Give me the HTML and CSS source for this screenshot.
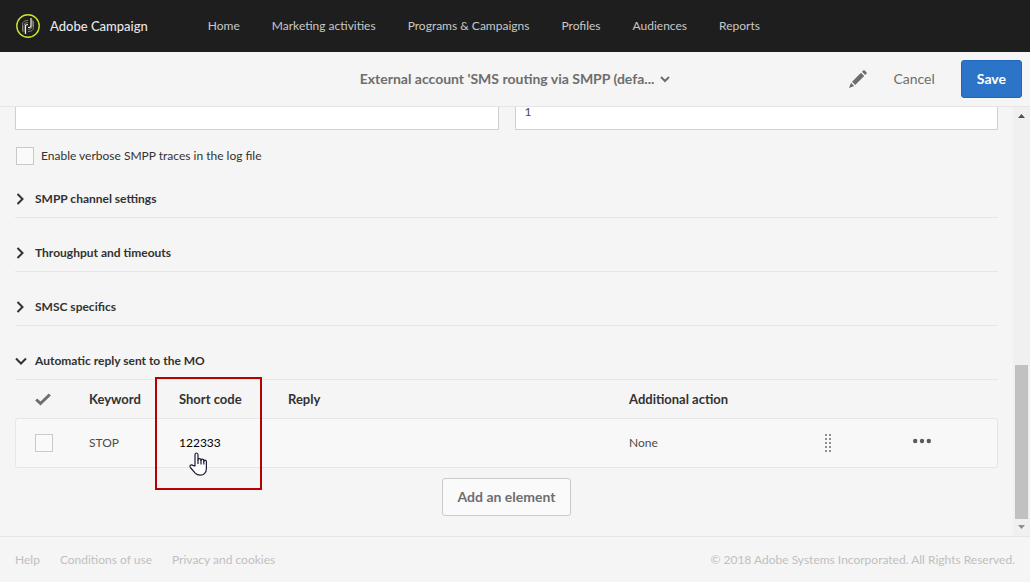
FILE: index.html
```html
<!DOCTYPE html>
<html lang="en">
  <head>
    <meta charset="UTF-8" />
    <meta name="viewport" content="width=device-width, initial-scale=1.0" />
    <title>Adobe Campaign</title>
    <link rel="stylesheet" href="styles.css">
  </head>
  <body>
    <header class="topbar">
      <a class="brand" href="#">
        <svg class="logo" width="24" height="24" viewBox="0 0 24 24" fill="none" aria-hidden="true">
          <circle cx="12" cy="12" r="11.2" stroke="#cbe32d" stroke-width="1.4" />
          <path d="M6.5 17.5V10.5Q6.5 6.5 12 6.5M8 18.5V11.5Q8 8.5 12 8.5" stroke="#85866f" />
          <path d="M17.5 7V13.5Q17.5 17.5 12 17.5M16.2 5.5V12.5Q16 15.5 12 15.5" stroke="#85866f" />
          <path d="M9.5 20V11.5Q9.5 10.5 12 10.5M15 4V12Q15 13.5 12 13.5" stroke="#f4f4dc" stroke-width="1.2" />
        </svg>
        <span>Adobe Campaign</span>
      </a>
      <nav class="nav">
        <a href="#">Home</a>
        <a href="#">Marketing activities</a>
        <a href="#">Programs &amp; Campaigns</a>
        <a href="#">Profiles</a>
        <a href="#">Audiences</a>
        <a href="#">Reports</a>
      </nav>
    </header>

    <div class="toolbar">
      <button class="title" type="button">
        <span>External account 'SMS routing via SMPP (defa...</span>
        <svg width="10" height="7" viewBox="0 0 10 7" fill="none" aria-hidden="true">
          <path d="M1 1l4 4 4-4" stroke="#6e6e6e" stroke-width="2" />
        </svg>
      </button>
      <div class="actions">
        <button class="edit" type="button" aria-label="Edit">
          <svg width="18" height="18" viewBox="0 0 18 18" fill="#6e6e6e" aria-hidden="true">
            <path d="M0 18l2-5.200L5.200 16zM3 11.800L12 2.800l3.200 3.200L6.200 15zM13 1.800l1.200-1.200q.8-.8 1.600 0l1.600 1.600q.8.800 0 1.600L16.200 5z" />
          </svg>
        </button>
        <button class="cancel" type="button">Cancel</button>
        <button class="save" type="button">Save</button>
      </div>
    </div>

    <div class="scroll-area">
      <main class="content">
        <div class="fields">
          <input type="text" aria-label="System type">
          <input type="text" aria-label="Connections" value="1">
        </div>

        <label class="verbose">
          <input class="checkbox" type="checkbox">
          Enable verbose SMPP traces in the log file
        </label>

        <button class="section" type="button" aria-expanded="false">
          <svg width="12" height="12" viewBox="0 0 12 12" fill="none" aria-hidden="true"><path d="M2.500 1l5 5-5 5" stroke="#323232" stroke-width="2" /></svg>
          SMPP channel settings
        </button>
        <button class="section" type="button" aria-expanded="false">
          <svg width="12" height="12" viewBox="0 0 12 12" fill="none" aria-hidden="true"><path d="M2.500 1l5 5-5 5" stroke="#323232" stroke-width="2" /></svg>
          Throughput and timeouts
        </button>
        <button class="section" type="button" aria-expanded="false">
          <svg width="12" height="12" viewBox="0 0 12 12" fill="none" aria-hidden="true"><path d="M2.500 1l5 5-5 5" stroke="#323232" stroke-width="2" /></svg>
          SMSC specifics
        </button>
        <button class="section" type="button" aria-expanded="true">
          <svg width="12" height="12" viewBox="0 0 12 12" fill="none" aria-hidden="true"><path d="M1 3.500l5 5 5-5" stroke="#323232" stroke-width="2" /></svg>
          Automatic reply sent to the MO
        </button>

        <table class="replies">
          <colgroup>
            <col class="col-check">
            <col class="col-keyword">
            <col class="col-code">
            <col>
            <col class="col-action">
            <col class="col-drag">
            <col class="col-more">
          </colgroup>
          <thead>
            <tr>
              <th>
                <svg width="16" height="13" viewBox="0 0 16 13" fill="none" aria-hidden="true">
                  <path d="M1.200 6.500l4.300 4L14.800 1.500" stroke="#6e6e6e" stroke-width="3" />
                </svg>
              </th>
              <th>Keyword</th>
              <th class="marked">Short code<span class="highlight"></span></th>
              <th>Reply</th>
              <th>Additional action</th>
              <th></th>
              <th></th>
            </tr>
          </thead>
          <tbody>
            <tr>
              <td><input class="checkbox" type="checkbox" aria-label="Select STOP"></td>
              <td>STOP</td>
              <td class="code">
                122333
                <svg class="pointer" width="19" height="25" viewBox="0 0 19 25" aria-hidden="true">
                  <path d="M6 14V3q0-2 1.500-2T9 3v5q0-1.400 1.500-1.400T12 8v.6q0-1.400 1.400-1.400t1.400 1.400v1q0-1.400 1.300-1.400t1.300 1.600v7q0 3-2 4.800-1.400 1.500-4 1.500-3.400 0-5.200-2L1.400 15.500q-1-1.600.3-2.400 1.300-.7 2.500.5z" fill="#fff" stroke="#1d1d33" stroke-width="1.200" stroke-linejoin="round" />
                  <path d="M9 7.500V12M12 8V12.500M14.800 9V12.500" fill="none" stroke="#1d1d33" stroke-width="1.200" />
                </svg>
              </td>
              <td></td>
              <td>None</td>
              <td>
                <svg width="6" height="18" viewBox="0 0 6 18" fill="#8e8e8e" aria-hidden="true">
                  <path d="M0 0h2v2H0zM4 0h2v2H4zM0 4h2v2H0zM4 4h2v2H4zM0 8h2v2H0zM4 8h2v2H4zM0 12h2v2H0zM4 12h2v2H4zM0 16h2v2H0zM4 16h2v2H4z" />
                </svg>
              </td>
              <td>
                <button class="more" type="button" aria-label="More">
                  <svg width="18" height="6" viewBox="0 0 18 6" fill="#5a5a5a" aria-hidden="true">
                    <circle cx="2.200" cy="3" r="2.200" /><circle cx="9" cy="3" r="2.200" /><circle cx="15.800" cy="3" r="2.200" />
                  </svg>
                </button>
              </td>
            </tr>
          </tbody>
        </table>

        <button class="add" type="button">Add an element</button>
      </main>

      <div class="scrollbar" aria-hidden="true">
        <svg width="7" height="4" viewBox="0 0 7 4" fill="#505050"><path d="M0 4L3.500 0 7 4z" /></svg>
        <div class="thumb"></div>
        <svg width="7" height="4" viewBox="0 0 7 4" fill="#8e8e8e"><path d="M0 0h7L3.500 4z" /></svg>
      </div>
    </div>

    <footer class="footer">
      <a href="#">Help</a>
      <a href="#">Conditions of use</a>
      <a href="#">Privacy and cookies</a>
      <span class="copyright">© 2018 Adobe Systems Incorporated. All Rights Reserved.</span>
    </footer>
  </body>
</html>
```
FILE: styles.css
```css
* {
  box-sizing: border-box;
}

body {
  margin: 0;
  padding: 0 1px 1px 0;
  height: 100vh;
  display: flex;
  flex-direction: column;
  font-family: Lato, "Open Sans", sans-serif;
  font-size: 12px;
  line-height: 20px;
  color: #4b4b4b;
  background: #fff;
}

a {
  color: inherit;
  text-decoration: none;
}

button {
  font: inherit;
  color: inherit;
  padding: 0;
  border: none;
  background: none;
  cursor: pointer;
}

svg {
  display: block;
  flex: none;
}

.topbar {
  height: 52px;
  flex: none;
  display: flex;
  align-items: center;
  gap: 60px;
  padding: 0 16px;
  background: #1e1e1e;
  color: #c8c8c8;
  white-space: nowrap;
}

.brand {
  display: flex;
  align-items: center;
  gap: 10px;
  font-size: 13px;
  font-weight: 500;
  color: #e6e6e6;
}

.nav {
  display: flex;
  gap: 32px;
}

.toolbar {
  height: 55px;
  flex: none;
  display: grid;
  grid-template-columns: 1fr auto 1fr;
  align-items: center;
  padding: 0 8px;
  background: #f5f5f5;
  border-bottom: 1px solid #e6e6e6;
  white-space: nowrap;
}

.title {
  grid-column: 2;
  display: flex;
  align-items: center;
  gap: 6px;
  font-size: 14px;
  font-weight: bold;
  color: #6e6e6e;
}

.actions {
  display: flex;
  align-items: center;
  justify-content: flex-end;
  gap: 26px;
  font-size: 14px;
  color: #6e6e6e;
}

.save {
  height: 38px;
  padding: 0 15px;
  border: 1px solid #1f67bc;
  border-radius: 3px;
  background: #2b74c7;
  color: #fff;
  font-weight: bold;
}

.scroll-area {
  flex: 1;
  min-height: 0;
  display: flex;
  overflow: hidden;
  background: #f5f5f5;
}

.content {
  flex: 1;
  min-width: 0;
  padding: 0 15px;
  display: flex;
  flex-direction: column;
}

/* the form is scrolled down, so its first row is cut by the toolbar */
.fields {
  display: grid;
  grid-template-columns: 1fr 1fr;
  gap: 16px;
  margin-top: -15px;
}

.fields input {
  height: 38px;
  min-width: 0;
  padding: 0 9px;
  border: 1px solid #d0d0d0;
  background: #fff;
  font: inherit;
  color: #4b4b4b;
}

.checkbox {
  appearance: none;
  display: block;
  width: 18px;
  height: 18px;
  margin: 0;
  border: 1px solid #cacaca;
  background: #fafafa;
}

.verbose {
  display: flex;
  align-items: center;
  gap: 7px;
  margin: 16px 0 14px 1px;
  color: #323232;
}

.section {
  flex: none;
  height: 38px;
  display: flex;
  align-items: center;
  gap: 8px;
  border-bottom: 1px solid #e6e6e6;
  font-weight: bold;
  color: #323232;
}

.section + .section {
  margin-top: 16px;
}

.replies {
  width: 100%;
  table-layout: fixed;
  border-collapse: separate;
  border-spacing: 0;
}

.col-check {
  width: 74px;
}

.col-keyword {
  width: 90px;
}

.col-code {
  width: 109px;
}

.col-action {
  width: 196px;
}

.col-drag {
  width: 88px;
}

.col-more {
  width: 85px;
}

.replies th,
.replies td {
  padding: 0;
  text-align: left;
}

.replies th {
  height: 38px;
  font-size: 13px;
  font-weight: bold;
  color: #323232;
}

.replies td {
  height: 50px;
  border: 1px solid #e6e6e6;
  border-width: 1px 0;
  background: #f8f8f8;
}

.replies th:first-child {
  padding-left: 20px;
}

.replies td:first-child {
  padding-left: 19px;
  border-left-width: 1px;
  border-radius: 3px 0 0 3px;
}

.replies td:last-child {
  border-right-width: 1px;
  border-radius: 0 3px 3px 0;
}

.marked,
.replies .code {
  position: relative;
}

.replies .code {
  color: #000;
}

.highlight {
  position: absolute;
  z-index: 1;
  left: -24px;
  top: -3px;
  width: 107px;
  height: 113px;
  border: 2px solid #b90000;
  pointer-events: none;
}

.pointer {
  position: absolute;
  left: 10px;
  top: 33px;
}

.more {
  display: block;
  padding-bottom: 4px;
}

.add {
  align-self: center;
  height: 38px;
  margin-top: 10px;
  padding: 0 15px;
  border: 1px solid #cacaca;
  border-radius: 3px;
  background: #fafafa;
  font-size: 14px;
  font-weight: bold;
  color: #6e6e6e;
}

.scrollbar {
  width: 17px;
  flex: none;
  display: flex;
  flex-direction: column;
  align-items: center;
  padding: 7px 0;
  background: #f0f0f0;
}

.thumb {
  width: 13px;
  height: 154px;
  margin: auto 0 6px;
  background: #c1c1c1;
}

.footer {
  height: 46px;
  flex: none;
  display: flex;
  align-items: center;
  gap: 20px;
  padding: 0 15px;
  border-top: 1px solid #e6e6e6;
  background: #f5f5f5;
  color: #c0c0c0;
  white-space: nowrap;
}

.copyright {
  margin-left: auto;
}
```
